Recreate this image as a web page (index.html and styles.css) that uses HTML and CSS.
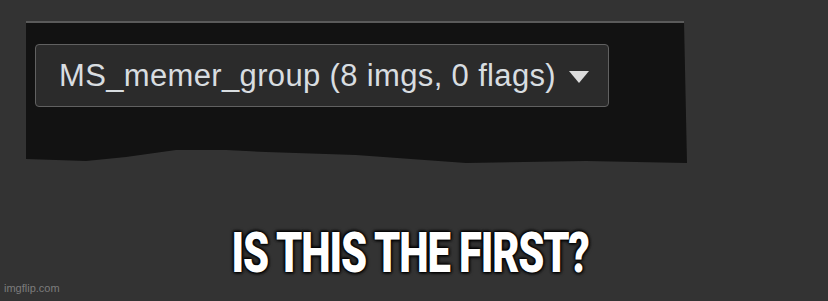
FILE: index.html
```html
<!DOCTYPE html>
<html>
<head>
<meta charset="utf-8">
<link rel="stylesheet" href="styles.css">
</head>
<body>
<div class="page">
  <div class="panel">
    <div class="select">
      <span class="select-label">MS_memer_group (8 imgs, 0 flags)</span>
      <svg class="caret" width="20" height="12" viewBox="0 0 20 12"><polygon points="0,0 20,0 10,12" fill="#dcdcdc"/></svg>
    </div>
  </div>
  <div class="caption"><span class="caption-text">IS THIS THE FIRST?</span></div>
  <div class="watermark">imgflip.com</div>
</div>
</body>
</html>
```

FILE: styles.css
```css
html, body {
  margin: 0;
  padding: 0;
  background: #333333;
}
.page {
  width: 828px;
  height: 301px;
  display: flex;
  flex-direction: column;
  overflow: hidden;
  font-family: "Liberation Sans", Arial, sans-serif;
}
.panel {
  margin: 21px 0 0 26px;
  width: 661px;
  height: 142px;
  box-sizing: border-box;
  background: #121212;
  border-top: 2px solid #5a5a5a;
  padding: 21px 0 0 9px;
  clip-path: polygon(0 0, 658px 0, 661px 142px, 560px 140px, 440px 142px, 330px 134px, 240px 131px, 200px 129px, 150px 129px, 100px 136px, 60px 140px, 0 138px);
}
.select {
  width: 574px;
  height: 63px;
  box-sizing: border-box;
  border: 1px solid #616161;
  border-radius: 4px;
  background: #2b2b2b;
  display: flex;
  align-items: center;
  padding-left: 23px;
  gap: 13px;
}
.select-label {
  color: #d8dde0;
  font-size: 31px;
  letter-spacing: 0.35px;
  white-space: nowrap;
}
.caret {
  flex: none;
  margin-top: 2px;
}
.caption {
  margin-top: 68px;
  height: 44px;
  display: flex;
  justify-content: center;
  padding-right: 8px;
}
.caption-text {
  display: inline-block;
  font-family: "Roboto", "Liberation Sans", sans-serif;
  font-weight: 900;
  font-size: 55px;
  line-height: 44px;
  color: #ffffff;
  letter-spacing: -1.5px;
  transform: scaleX(0.76);
  white-space: nowrap;
  text-shadow: 0 0 3px #000, 0 0 3px #000, 1px 1px 4px #000, -1px -1px 4px #000;
}
.watermark {
  margin: 7px 0 0 4px;
  font-size: 11px;
  color: #7c7c7c;
  line-height: 13px;
}
```
